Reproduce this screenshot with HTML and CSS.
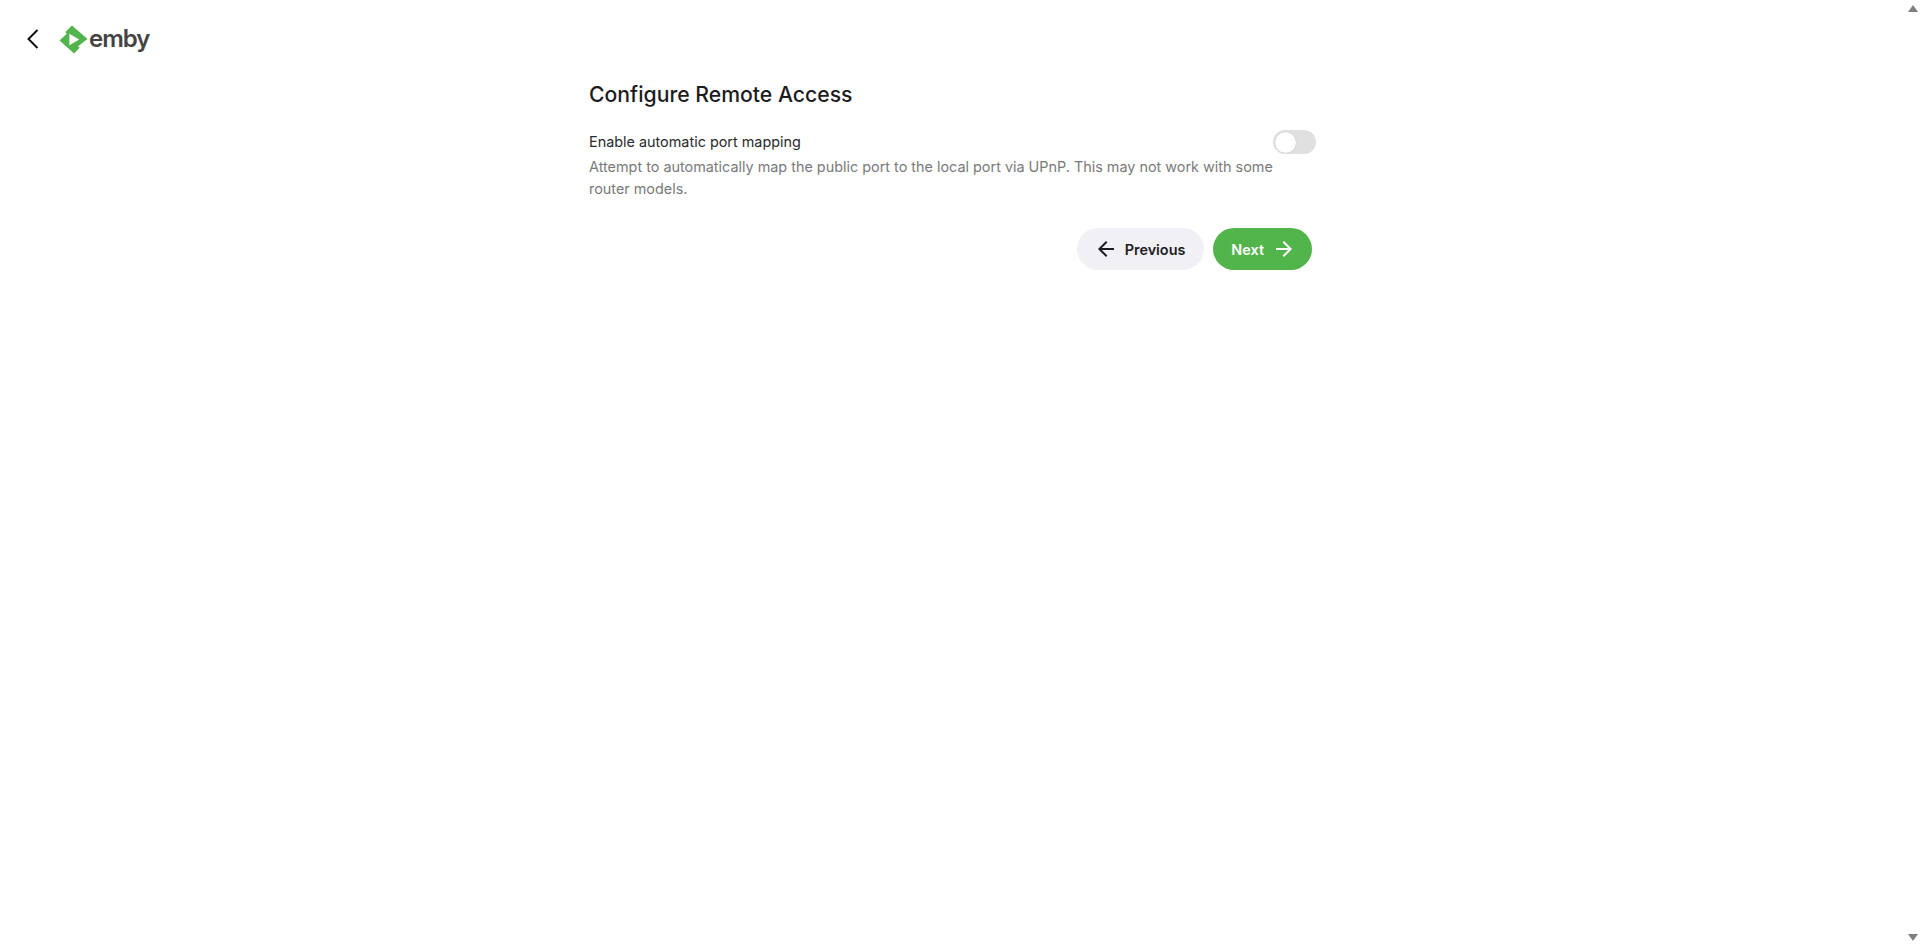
FILE: index.html
```html
<!DOCTYPE html>
<html lang="en">
<head>
<meta charset="utf-8">
<title>Emby</title>
<link rel="stylesheet" href="styles.css">
</head>
<body>
<div class="page">
  <div class="content">
    <header class="topbar">
      <button class="back" aria-label="Back">
        <svg width="24" height="24" viewBox="0 0 24 24"><path d="M17.500 3 8.500 12l9 9" fill="none" stroke="#111" stroke-width="2"/></svg>
      </button>
      <div class="logo">
        <svg class="logo-mark" width="29" height="29" viewBox="0 0 28 28">
          <path d="M12.500 0.500 L6 7 L7.500 8.500 L0.500 15 L14.500 27.500 L20 22 L18.500 20.500 L27.500 13.500 Z" fill="#52b54b"/>
          <path d="M10 8.500 L19.500 14 L10 19.500 Z" fill="#fff"/>
        </svg>
        <span class="logo-text">emby</span>
      </div>
    </header>
    <main class="wizard">
      <h1 class="title">Configure Remote Access</h1>
      <div class="field">
        <div class="field-label">Enable automatic port mapping</div>
        <span class="toggle"><span class="knob"></span></span>
      </div>
      <p class="field-desc">Attempt to automatically map the public port to the local port via UPnP. This may not work with some router models.</p>
      <div class="actions">
        <button class="btn btn-secondary">
          <svg width="24" height="24" viewBox="0 0 24 24"><path d="M20 11H7.830l5.590-5.590L12 4l-8 8 8 8 1.410-1.410L7.830 13H20v-2z" fill="#1c1c22"/></svg>
          <span>Previous</span>
        </button>
        <button class="btn btn-primary">
          <span>Next</span>
          <svg width="24" height="24" viewBox="0 0 24 24"><path d="M12 4l-1.410 1.410L16.170 11H4v2h12.170l-5.580 5.590L12 20l8-8z" fill="#fff"/></svg>
        </button>
      </div>
    </main>
  </div>
  <aside class="scrollbar" aria-hidden="true">
    <span class="arrow arrow-up"></span>
    <span class="arrow arrow-down"></span>
  </aside>
</div>
</body>
</html>
```
FILE: styles.css
```css
* { box-sizing: border-box; }
html, body { margin: 0; height: 100%; background: #fff; overflow: hidden; }
body { font-family: Inter, "Liberation Sans", sans-serif; color: #1c1c1e; }
.page { display: flex; height: 945px; }
.content { flex: 1; min-width: 0; }
.scrollbar {
  width: 15px; display: flex; flex-direction: column;
  justify-content: space-between; align-items: center; padding: 5px 0 4px;
}
.arrow { width: 0; height: 0; border-left: 5px solid transparent; border-right: 5px solid transparent; }
.arrow-up { border-bottom: 7px solid #7f7f7f; }
.arrow-down { border-top: 7px solid #7f7f7f; }
.topbar { display: flex; align-items: center; height: 78px; padding-left: 20px; }
.back { width: 24px; height: 24px; padding: 0; border: 0; background: none; display: flex; }
.logo { display: flex; align-items: center; margin-left: 15px; }
.logo-mark { display: block; }
.logo-text {
  font-family: Inter, sans-serif; font-weight: 600; font-size: 24px;
  line-height: 28px; color: #444; letter-spacing: -1px; margin-left: 1px;
}
.wizard { width: 727px; margin: 0 auto; }
.title { margin: 0; font-size: 21.2px; font-weight: 550; line-height: 33px; color: #1c1c1e; }
.field { display: flex; justify-content: space-between; align-items: center; margin-top: 19px; height: 24px; }
.field-label { font-size: 14.4px; line-height: 22px; color: #2a2a2c; }
.toggle { width: 43px; height: 24px; border-radius: 12px; background: #e0e0e0; padding: 1.5px; display: block; }
.knob { display: block; width: 21px; height: 21px; border-radius: 50%; background: #fff; box-shadow: 0 0 1px rgba(0,0,0,.25); }
.field-desc { margin: 2px 0 0; width: 700px; font-size: 14.4px; line-height: 22px; color: #7a7a7a; }
.actions { display: flex; justify-content: flex-end; gap: 9px; margin-top: 28px; padding-right: 4px; }
.btn {
  display: flex; align-items: center; height: 42px; border: 0; border-radius: 21px;
  font-family: inherit; font-size: 14.4px; font-weight: 600;
}
.btn-secondary { background: #f1f1f5; color: #1c1c22; gap: 7px; padding: 0 19px 0 17px; }
.btn-primary { background: #52b54b; color: #fff; gap: 8px; padding: 0 16px 0 18px; }
```
